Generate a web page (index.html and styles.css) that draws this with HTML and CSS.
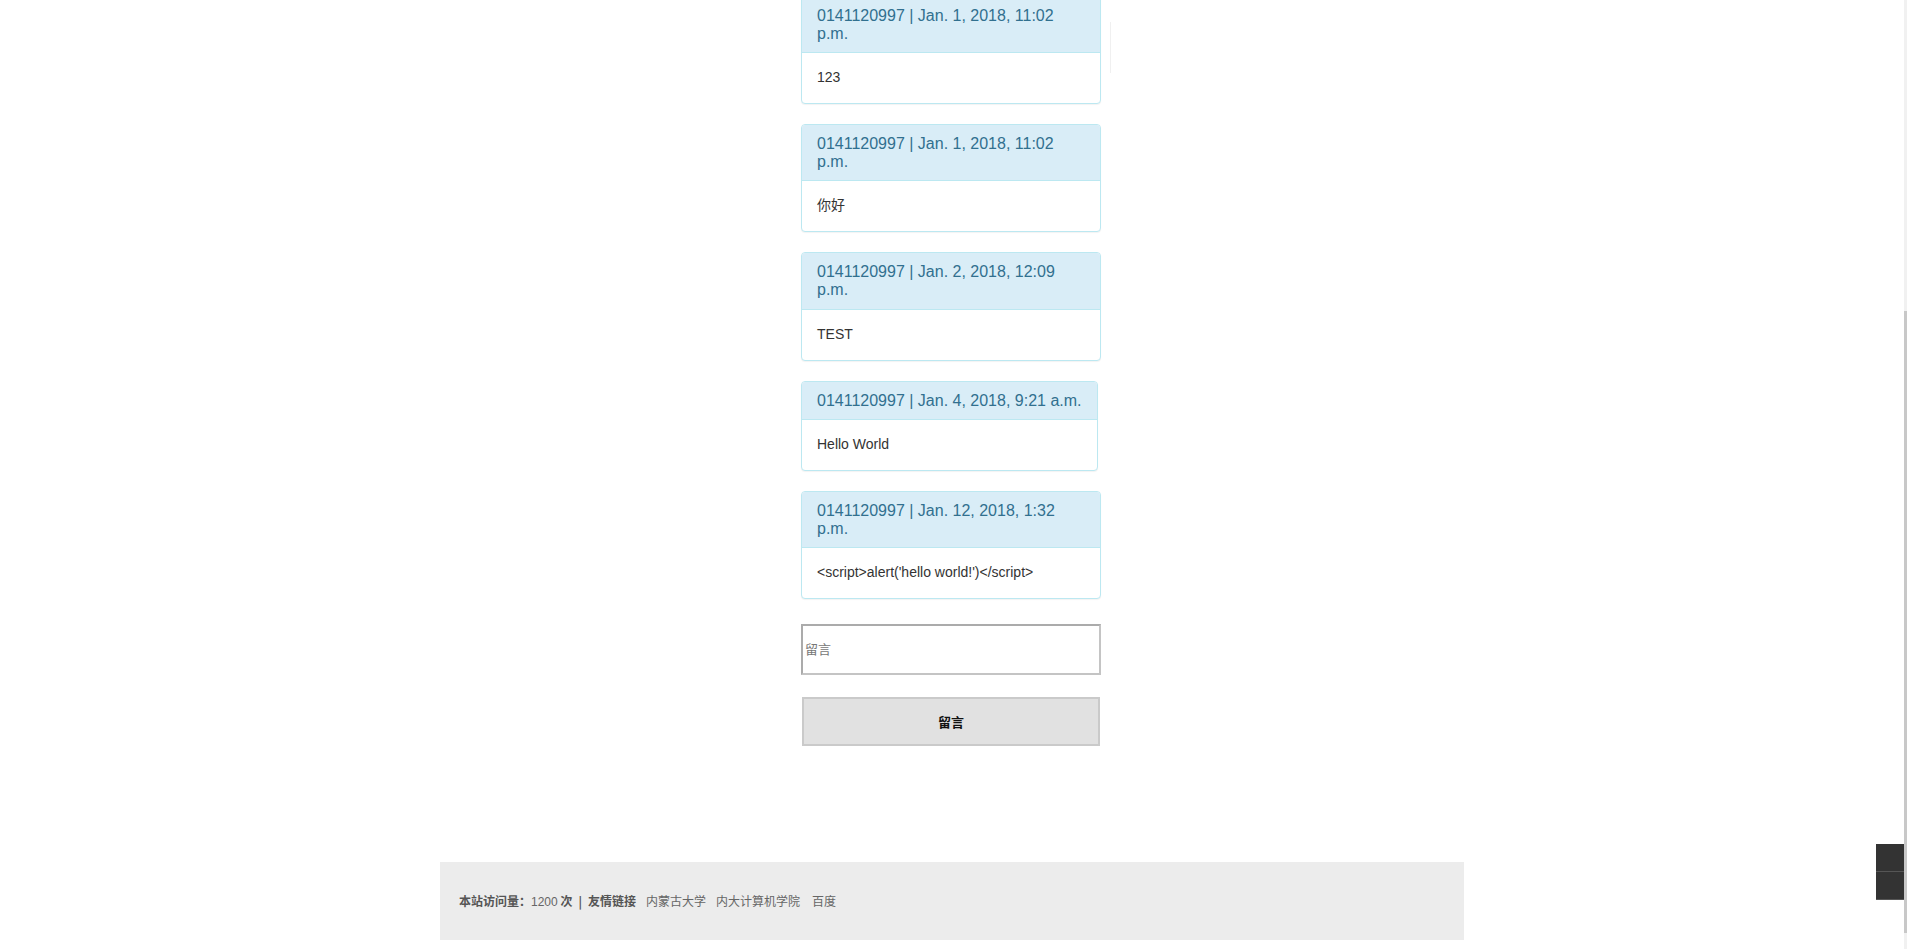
FILE: index.html
```html
<!DOCTYPE html>
<html lang="zh-CN">
<head>
<meta charset="utf-8">
<title>留言板</title>
<link rel="stylesheet" href="styles.css">
</head>
<body>
<div class="page">
  <main class="board">
    <div class="messages">
      <div class="panel">
        <div class="panel-heading"><h3 class="panel-title">0141120997 | Jan. 1, 2018, 11:02 p.m.</h3></div>
        <div class="panel-body">123</div>
      </div>
      <div class="panel">
        <div class="panel-heading"><h3 class="panel-title">0141120997 | Jan. 1, 2018, 11:02 p.m.</h3></div>
        <div class="panel-body">你好</div>
      </div>
      <div class="panel">
        <div class="panel-heading"><h3 class="panel-title">0141120997 | Jan. 2, 2018, 12:09 p.m.</h3></div>
        <div class="panel-body">TEST</div>
      </div>
      <div class="panel">
        <div class="panel-heading"><h3 class="panel-title">0141120997 | Jan. 4, 2018, 9:21 a.m.</h3></div>
        <div class="panel-body">Hello World</div>
      </div>
      <div class="panel">
        <div class="panel-heading"><h3 class="panel-title">0141120997 | Jan. 12, 2018, 1:32 p.m.</h3></div>
        <div class="panel-body">&lt;script&gt;alert('hello world!')&lt;/script&gt;</div>
      </div>
    </div>
    <form class="comment-form">
      <input class="comment-input" type="text" placeholder="留言">
      <button class="comment-btn" type="button">留言</button>
    </form>
    <span class="edge-line"></span>
  </main>
  <footer class="footer">
    <p class="footer-line"><strong>本站访问量：</strong><span class="count">1200</span> <strong>次<span class="sep">|</span>友情链接</strong><a class="flink" href="#">内蒙古大学</a><a class="flink" href="#">内大计算机学院</a><a class="flink wide" href="#">百度</a></p>
  </footer>
</div>
<div class="side-tools">
  <a class="tool" href="#"></a>
  <a class="tool" href="#"></a>
</div>
<div class="scroll-track"><div class="scroll-thumb"></div></div>
</body>
</html>
```

FILE: styles.css
```css
html, body {
  margin: 0;
  padding: 0;
  background: #fff;
}
body {
  font-family: "Liberation Sans", Arial, "Noto Sans CJK SC", sans-serif;
  font-size: 14px;
  line-height: 1.42857;
  color: #333;
  padding-right: 3px;
  height: 949px;
  overflow: hidden;
}
.page {
  width: 1024px;
  margin: 0 auto;
}
.board {
  position: relative;
  width: 302px;
  margin: -4px auto 0;
}
.messages {
  display: flex;
  flex-direction: column;
  align-items: flex-start;
}
.panel {
  max-width: 300px;
  box-sizing: border-box;
  border: 1px solid #bce8f1;
  border-radius: 4px;
  background: #fff;
  margin-bottom: 20px;
  box-shadow: 0 1px 1px rgba(0,0,0,0.05);
}
.panel-heading {
  background: #d9edf7;
  color: #31708f;
  padding: 10px 15px;
  border-bottom: 1px solid #bce8f1;
  border-radius: 3px 3px 0 0;
}
.panel-title {
  margin: 0;
  font-size: 16px;
  font-weight: normal;
  line-height: 1.1;
}
.panel-body {
  padding: 15px;
}
.comment-form {
  display: flex;
  flex-direction: column;
  width: 300px;
  margin-top: 5px;
}
.comment-input {
  box-sizing: border-box;
  width: 300px;
  height: 51px;
  border: 2px solid #ababab;
  border-right-color: #c4c4c4;
  border-bottom-color: #c4c4c4;
  padding: 1px 2px;
  font-family: "Liberation Sans", "Noto Sans CJK SC", sans-serif;
  font-size: 13px;
  color: #333;
  outline: none;
  margin: 0;
}
.comment-input::placeholder {
  color: #777;
}
.comment-btn {
  box-sizing: border-box;
  width: 298px;
  height: 49px;
  margin: 22px 1px 0;
  background: #e1e1e1;
  border: 2px solid #cacaca;
  font-family: "Liberation Sans", "Noto Sans CJK SC", sans-serif;
  font-size: 13px;
  font-weight: bold;
  color: #111;
  cursor: pointer;
}
.edge-line {
  position: absolute;
  left: 309px;
  top: 26px;
  width: 1px;
  height: 51px;
  background: #f0f0f0;
}
.footer {
  margin-top: 116px;
  height: 78px;
  box-sizing: border-box;
  background: #ececec;
  padding: 30px 19px;
  font-family: "Noto Sans CJK SC", sans-serif;
  font-size: 12px;
  color: #666;
}
.footer-line {
  margin: 0;
  line-height: 18px;
  white-space: nowrap;
}
.footer strong {
  color: #555;
}
.count {
  color: #666;
  font-family: "Liberation Sans", sans-serif;
}
.sep {
  margin: 0 6px;
}
.flink {
  color: #666;
  text-decoration: none;
  margin-left: 10px;
}
.flink.wide {
  margin-left: 12px;
}
.side-tools {
  position: fixed;
  left: 1876px;
  top: 844px;
  width: 28px;
  display: flex;
  flex-direction: column;
}
.tool {
  display: block;
  height: 27px;
  background: #333;
  border-bottom: 1px solid #555;
}
.scroll-track {
  position: fixed;
  left: 1904px;
  top: 0;
  width: 3px;
  height: 949px;
  background: #f1f1f1;
}
.scroll-thumb {
  margin-top: 311px;
  height: 622px;
  background: #c8c8c8;
}
```
